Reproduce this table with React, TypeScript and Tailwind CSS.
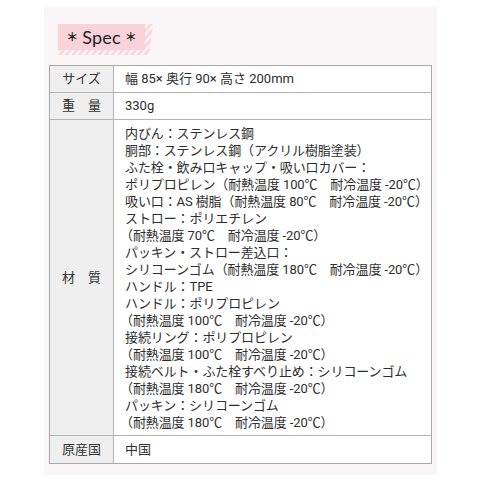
import React from 'react';

const materials: string[] = [
    '内びん：ステンレス鋼',
    '胴部：ステンレス鋼（アクリル樹脂塗装）',
    'ふた栓・飲み口キャップ・吸い口カバー：',
    'ポリプロピレン（耐熱温度 100℃　耐冷温度 -20℃）',
    '吸い口：AS 樹脂（耐熱温度 80℃　耐冷温度 -20℃）',
    'ストロー：ポリエチレン',
    '（耐熱温度 70℃　耐冷温度 -20℃）',
    'パッキン・ストロー差込口：',
    'シリコーンゴム（耐熱温度 180℃　耐冷温度 -20℃）',
    'ハンドル：TPE',
    'ハンドル：ポリプロピレン',
    '（耐熱温度 100℃　耐冷温度 -20℃）',
    '接続リング：ポリプロピレン',
    '（耐熱温度 100℃　耐冷温度 -20℃）',
    '接続ベルト・ふた栓すべり止め：シリコーンゴム',
    '（耐熱温度 180℃　耐冷温度 -20℃）',
    'パッキン：シリコーンゴム',
    '（耐熱温度 180℃　耐冷温度 -20℃）',
];

function Tape() {
    return (
        <div className="relative w-[96px] h-[31px]">
            <svg width="96" height="31" className="absolute left-0 top-0">
                <defs>
                    <pattern
                        id="tapeStripe"
                        width="5"
                        height="5"
                        patternUnits="userSpaceOnUse"
                        patternTransform="rotate(40)">
                        <rect width="2.6" height="5" fill="#f8d4da" />
                    </pattern>
                </defs>
                <rect x="0" y="0" width="87" height="26" fill="#f8d4da" />
                <rect x="0" y="26" width="87" height="5" fill="url(#tapeStripe)" />
                <polygon points="87,0 95,0 91,31 87,31" fill="url(#tapeStripe)" />
            </svg>
            <div className="relative flex items-center justify-center w-[87px] h-[26px] text-[18px] leading-[26px] text-[#222] font-['Lato','Noto_Sans',sans-serif]">
                <span className="font-bold text-[12px] mr-[4px] font-['Noto_Sans_CJK_JP',sans-serif]">＊</span>
                <span className="tracking-[0.2px]">Spec</span>
                <span className="font-bold text-[12px] ml-[4px] font-['Noto_Sans_CJK_JP',sans-serif]">＊</span>
            </div>
        </div>
    );
}

function Row({ label, children, height }: { label: string; children: React.ReactNode; height?: string }) {
    return (
        <div className={`flex border-b border-[#b4b4b4] last:border-b-0 ${height ?? ''}`}>
            <div className="w-[64px] shrink-0 bg-[#efefef] border-r border-[#b4b4b4] flex items-center justify-center text-[13px] text-[#333] font-['Roboto','Noto_Sans_CJK_JP',sans-serif]">
                {label}
            </div>
            <div className="flex-1 pl-[11px] flex flex-col justify-center text-[13px] text-[#2e2e2e] font-['Roboto','Noto_Sans_CJK_JP',sans-serif]">
                {children}
            </div>
        </div>
    );
}

export default function App() {
    return (
        <div className="w-[480px] h-[480px] bg-white pt-[7px] pl-[44px] font-['Noto_Sans_CJK_JP','Noto_Sans',sans-serif]">
            <div className="w-[393px] h-[468px] bg-[#faf6f7] pt-[17px] pl-[14px]">
                <Tape />
                <div className="mt-[10px] -ml-[9px] w-[383px] border border-[#a8a8a8] bg-white">
                    <Row label="サイズ" height="h-[27px]">
                        <div className="whitespace-nowrap">幅 85× 奥行 90× 高さ 200mm</div>
                    </Row>
                    <Row label="重　量" height="h-[27px]">
                        <div className="whitespace-nowrap">330g</div>
                    </Row>
                    <Row label="材　質" height="h-[316px]">
                        <div className="leading-[17px] tracking-[-0.1px]">
                            {materials.map((line, i) => (
                                <div
                                    key={i}
                                    className={`whitespace-nowrap ${line.startsWith('（') ? '-ml-[5px]' : ''}`}>
                                    {line}
                                </div>
                            ))}
                        </div>
                    </Row>
                    <Row label="原産国" height="h-[27px]">
                        <div className="whitespace-nowrap">中国</div>
                    </Row>
                </div>
            </div>
        </div>
    );
}
